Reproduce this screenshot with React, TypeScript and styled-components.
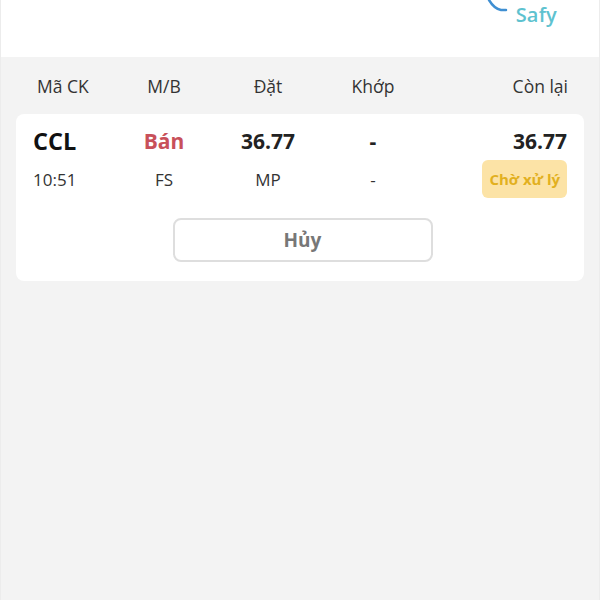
import styled, { createGlobalStyle } from "styled-components";

const GlobalStyle = createGlobalStyle`
    html, body {
        margin: 0;
        padding: 0;
        background: #f3f3f3;
        font-family: "Open Sans", "Noto Sans", sans-serif;
    }
`;

const Screen = styled.div`
    width: 600px;
    height: 600px;
    background-color: #f3f3f3;
    border-left: 1px solid #ececec;
    border-right: 1px solid #ececec;
    box-sizing: border-box;
    display: flex;
    flex-direction: column;
    overflow: hidden;
`;

const Header = styled.div`
    height: 57px;
    background-color: #fff;
    display: flex;
    justify-content: flex-end;
    align-items: flex-start;
    padding-right: 42px;
    flex-shrink: 0;
`;

const Logo = styled.div`
    display: flex;
    align-items: flex-start;
    gap: 8px;
`;

const LogoText = styled.span`
    margin-top: 1px;
    font-size: 20px;
    font-weight: 600;
    color: #5ec2cf;
    letter-spacing: 0.2px;
`;

const Body = styled.div`
    padding: 0 15px;
`;

const Columns = styled.div`
    display: grid;
    grid-template-columns: 80px 102px 106px 104px 1fr;
    align-items: center;
`;

const HeadRow = styled(Columns)`
    height: 57px;
    padding: 0 16px 0 17px;
    font-size: 17.5px;
    color: #333;
`;

const Cell = styled.div<{ align?: "left" | "center" | "right" }>`
    text-align: ${(p) => p.align || "center"};
    white-space: nowrap;
`;

const HeadCell = styled(Cell)<{ indent?: boolean }>`
    padding-left: ${(p) => (p.indent ? "4px" : "0")};
`;

const Card = styled.div`
    background-color: #fff;
    border-radius: 8px;
    padding: 10px 17px 19px;
    display: flex;
    flex-direction: column;
`;

const MainRow = styled(Columns)`
    height: 34px;
    font-weight: 700;
    font-size: 21px;
    color: #222;
`;

const SubRow = styled(Columns)`
    height: 40px;
    margin-top: 1px;
    font-size: 17px;
    color: #333;
`;

const Symbol = styled(Cell)`
    font-size: 23.5px;
    color: #111;
`;

const Side = styled(Cell)`
    color: #c8505a;
`;

const Badge = styled.span`
    display: inline-block;
    background-color: #fce3a6;
    color: #e2b01f;
    font-weight: 700;
    font-size: 15px;
    padding: 0 7px;
    height: 38px;
    line-height: 38px;
    border-radius: 6px;
`;

const Actions = styled.div`
    display: flex;
    justify-content: center;
    margin-top: 19px;
`;

const CancelButton = styled.button`
    width: 260px;
    height: 44px;
    margin-left: 5px;
    background: #fff;
    border: 2px solid #dedede;
    border-radius: 8px;
    font-family: inherit;
    font-size: 19px;
    font-weight: 700;
    color: #777;
    cursor: pointer;
`;

function LogoMark() {
    return (
        <svg width="22" height="14" viewBox="0 0 22 14">
            <path d="M3 0 C 6 5, 10 9, 15 10 L 20 10" stroke="#3f8fd2" strokeWidth="2.5" fill="none" strokeLinecap="round" />
        </svg>
    );
}

export default function App() {
    return (
        <>
            <GlobalStyle />
            <Screen>
                <Header>
                    <Logo>
                        <LogoMark />
                        <LogoText>Safy</LogoText>
                    </Logo>
                </Header>
                <Body>
                    <HeadRow>
                        <HeadCell align="left" indent>Mã CK</HeadCell>
                        <HeadCell>M/B</HeadCell>
                        <HeadCell>Đặt</HeadCell>
                        <HeadCell>Khớp</HeadCell>
                        <HeadCell align="right">Còn lại</HeadCell>
                    </HeadRow>
                    <Card>
                        <MainRow>
                            <Symbol align="left">CCL</Symbol>
                            <Side>Bán</Side>
                            <Cell>36.77</Cell>
                            <Cell>-</Cell>
                            <Cell align="right">36.77</Cell>
                        </MainRow>
                        <SubRow>
                            <Cell align="left">10:51</Cell>
                            <Cell>FS</Cell>
                            <Cell>MP</Cell>
                            <Cell>-</Cell>
                            <Cell align="right">
                                <Badge>Chờ xử lý</Badge>
                            </Cell>
                        </SubRow>
                        <Actions>
                            <CancelButton>Hủy</CancelButton>
                        </Actions>
                    </Card>
                </Body>
            </Screen>
        </>
    );
}
